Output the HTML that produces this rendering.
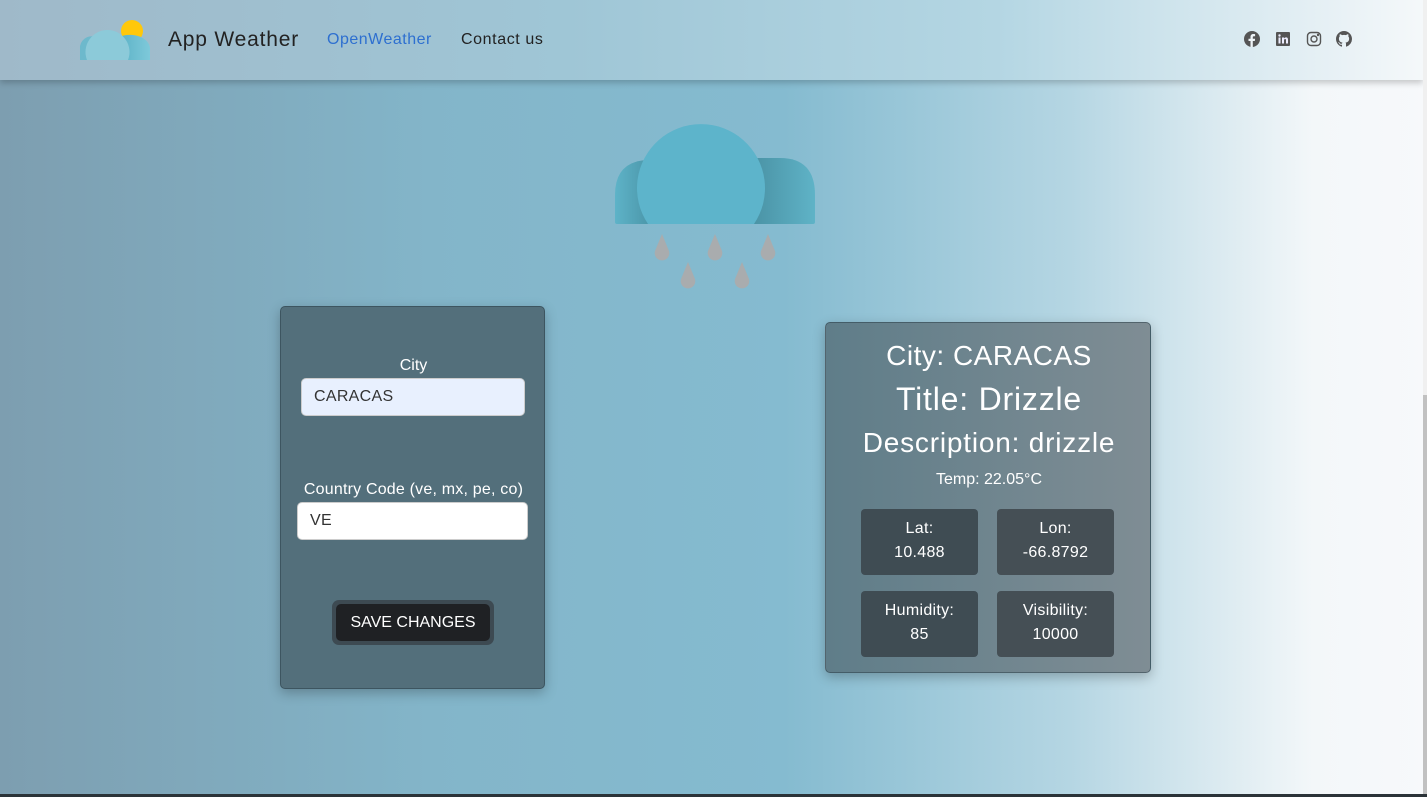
<!DOCTYPE html>
<html><head><meta charset="utf-8"><style>
*{box-sizing:border-box;margin:0;padding:0}
body{width:1427px;height:797px;overflow:hidden;position:relative;font-family:"Liberation Sans",sans-serif;
background:linear-gradient(90deg,#7d9eb0 0%,#83b5c9 30%,#85bbd0 55%,#b5d6e3 75%,#f3f7f9 92%,#f7f9fb 100%);}
.nav{position:absolute;left:0;top:0;width:1423px;height:80px;background:linear-gradient(90deg,#9fb9c9 0%,#9fc6d6 40%,#b4d6e3 70%,#f5f8fa 100%);box-shadow:0 3px 6px rgba(0,0,0,.2)}
.abs{position:absolute}
.sb{position:absolute;right:0;top:0;width:4px;height:797px;background:#f0f0f0}
.sb:after{content:"";position:absolute;left:0;top:395px;width:4px;height:400px;background:#c1c1c1}
.card{position:absolute;border:1px solid rgba(40,60,70,.5);border-radius:5px;box-shadow:0 4px 12px rgba(0,0,0,.25)}
.lbl{position:absolute;color:#fff;font-size:16px;text-align:center}
.in{position:absolute;border:1px solid #ccc;border-radius:5px;font-size:16px;color:#333;padding-left:12px;line-height:36px;letter-spacing:.3px}
.box{position:absolute;width:117px;height:66px;background:#3f4c53;border-radius:4px;color:#fff;font-size:16px;text-align:center;line-height:24px;padding-top:8px;letter-spacing:.3px}
.ic{position:absolute;top:31px;width:16px;height:16px}
</style></head><body>
<div class="nav">
 <svg class="abs" style="left:78px;top:18px" width="74" height="44" viewBox="0 0 74 44">
  <defs><linearGradient id="hl" x1="0" x2="1"><stop offset="0" stop-color="#5fb4c8"/><stop offset="1" stop-color="#7ec9da"/></linearGradient></defs>
  <circle cx="54" cy="13" r="11" fill="#ffc80a"/>
  <path d="M2 42 V28 A12 12 0 0 1 20 20 V42Z" fill="#6db9cc"/>
  <path d="M44 42 V18 A20 14 0 0 1 72 30 V42Z" fill="url(#hl)"/>
  <path d="M9 42 A22 22 0 1 1 50 42Z" fill="#8ccad9"/>
 </svg>
 <div class="abs" style="left:168px;top:28px;font-size:21px;color:#222;letter-spacing:.8px">App Weather</div>
 <div class="abs" style="left:327px;top:31px;font-size:16px;color:#2d6fd0;letter-spacing:.5px">OpenWeather</div>
 <div class="abs" style="left:461px;top:31px;font-size:16px;color:#222;letter-spacing:.6px">Contact us</div>
 <svg class="ic" style="left:1244px" viewBox="0 0 16 16"><circle cx="8" cy="8" r="8" fill="#555"/><path d="M8.8 16V10h2l.3-2.3H8.8V6.3c0-.7.2-1.1 1.1-1.1h1.2V3.1c-.2 0-.9-.1-1.7-.1-1.7 0-2.9 1-2.9 2.9v1.8h-2V10h2v6z" fill="#eef4f7"/></svg>
 <svg class="ic" style="left:1275px" viewBox="0 0 16 16"><rect x="1" y="1" width="14" height="14" rx="1" fill="#555"/><rect x="3.5" y="6.5" width="2" height="6" fill="#eef"/><circle cx="4.5" cy="4.5" r="1.2" fill="#eef"/><path d="M7 6.5h2v1c.4-.7 1.2-1.1 2-1.1 1.6 0 2 1 2 2.5v3.6h-2V9.2c0-.8-.2-1.2-.9-1.2S9 8.5 9 9.3v3.2H7z" fill="#eef"/></svg>
 <svg class="ic" style="left:1306px" viewBox="0 0 16 16" fill="none" stroke="#555" stroke-width="1.4"><rect x="1.5" y="1.5" width="13" height="13" rx="3.5"/><circle cx="8" cy="8" r="3"/><circle cx="12" cy="4" r=".5" fill="#555"/></svg>
 <svg class="ic" style="left:1336px" viewBox="0 0 16 16"><path fill="#555" d="M8 0C3.58 0 0 3.58 0 8c0 3.540 2.29 6.53 5.47 7.59.4.07.55-.17.55-.38 0-.19-.01-.82-.01-1.49-2.01.37-2.530-.49-2.69-.94-.09-.23-.48-.94-.82-1.13-.28-.15-.68-.52-.01-.53.63-.01 1.08.58 1.23.82.72 1.21 1.87.87 2.33.66.07-.52.28-.87.51-1.070-1.78-.2-3.64-.89-3.64-3.95 0-.87.31-1.59.82-2.15-.08-.2-.36-1.02.08-2.12 0 0 .67-.21 2.2.82.64-.18 1.32-.27 2-.27.68 0 1.36.09 2 .27 1.53-1.04 2.2-.82 2.2-.82.44 1.1.16 1.92.08 2.12.51.56.82 1.27.82 2.15 0 3.07-1.87 3.75-3.65 3.95.29.25.54.73.54 1.48 0 1.07-.01 1.93-.01 2.2 0 .21.15.46.55.38A8.013 8.013 0 0016 8c0-4.42-3.58-8-8-8z"/></svg>
</div>
<svg class="abs" style="left:612px;top:120px" width="210" height="172" viewBox="612 120 210 172">
 <defs><linearGradient id="lh" x1="0" x2="1"><stop offset="0" stop-color="#5eb3c8"/><stop offset="1" stop-color="#438a9c"/></linearGradient>
 <linearGradient id="rh" x1="0" x2="1"><stop offset="0" stop-color="#468c9e"/><stop offset="1" stop-color="#5fb3c7"/></linearGradient></defs>
 <path d="M615 222 V195 Q615 160 650 160 H665 V224 H617 A2 2 0 0 1 615 222Z" fill="url(#lh)"/>
 <path d="M740 224 V158 H780 Q815 158 815 195 V222 A2 2 0 0 1 813 224Z" fill="url(#rh)"/>
 <path d="M648 224 A64 64 0 1 1 754 224Z" fill="#5db4cb"/>
 <g fill="#a9acae">
  <path d="M662 234 L669 251 A7.3 7.3 0 1 1 655 251Z"/>
  <path d="M715 234 L722 251 A7.3 7.3 0 1 1 708 251Z"/>
  <path d="M768 234 L775 251 A7.3 7.3 0 1 1 761 251Z"/>
  <path d="M688 262 L695 279 A7.3 7.3 0 1 1 681 279Z"/>
  <path d="M742 262 L749 279 A7.3 7.3 0 1 1 735 279Z"/>
 </g>
</svg>
<div class="card" style="left:280px;top:306px;width:265px;height:383px;background:#536f7b">
 <div class="lbl" style="left:0;width:265px;top:50px">City</div>
 <div class="in" style="left:20px;top:71px;width:224px;height:38px;background:#e8f0fe">CARACAS</div>
 <div class="lbl" style="left:0;width:265px;top:174px;letter-spacing:.2px">Country Code (ve, mx, pe, co)</div>
 <div class="in" style="left:16px;top:195px;width:231px;height:38px;background:#fff">VE</div>
 <div class="abs" style="left:51px;top:293px;width:162px;height:45px;border-radius:7px;background:#3d4a52"></div>
 <div class="abs" style="left:55px;top:297px;width:154px;height:37px;border-radius:5px;background:#1f2124;color:#fff;font-size:16px;text-align:center;line-height:37px">SAVE CHANGES</div>
</div>
<div class="card" style="left:825px;top:322px;width:326px;height:351px;background:linear-gradient(90deg,#5f7d89,#7f8d94)">
 <div class="lbl" style="left:0;width:326px;top:17px;font-size:28px;letter-spacing:.5px">City: CARACAS</div>
 <div class="lbl" style="left:0;width:326px;top:58px;font-size:32px;letter-spacing:.8px">Title: Drizzle</div>
 <div class="lbl" style="left:0;width:326px;top:104px;font-size:28px;letter-spacing:.8px">Description: drizzle</div>
 <div class="lbl" style="left:0;width:326px;top:148px;font-size:16px">Temp: 22.05°C</div>
 <div class="box" style="left:35px;top:186px">Lat:<br>10.488</div>
 <div class="box" style="left:171px;top:186px;background:#454f55">Lon:<br>-66.8792</div>
 <div class="box" style="left:35px;top:268px">Humidity:<br>85</div>
 <div class="box" style="left:171px;top:268px;background:#454f55">Visibility:<br>10000</div>
</div>
<div class="sb"></div>
<div class="abs" style="left:0;top:794px;width:1427px;height:3px;background:#2b3338"></div>
</body></html>
